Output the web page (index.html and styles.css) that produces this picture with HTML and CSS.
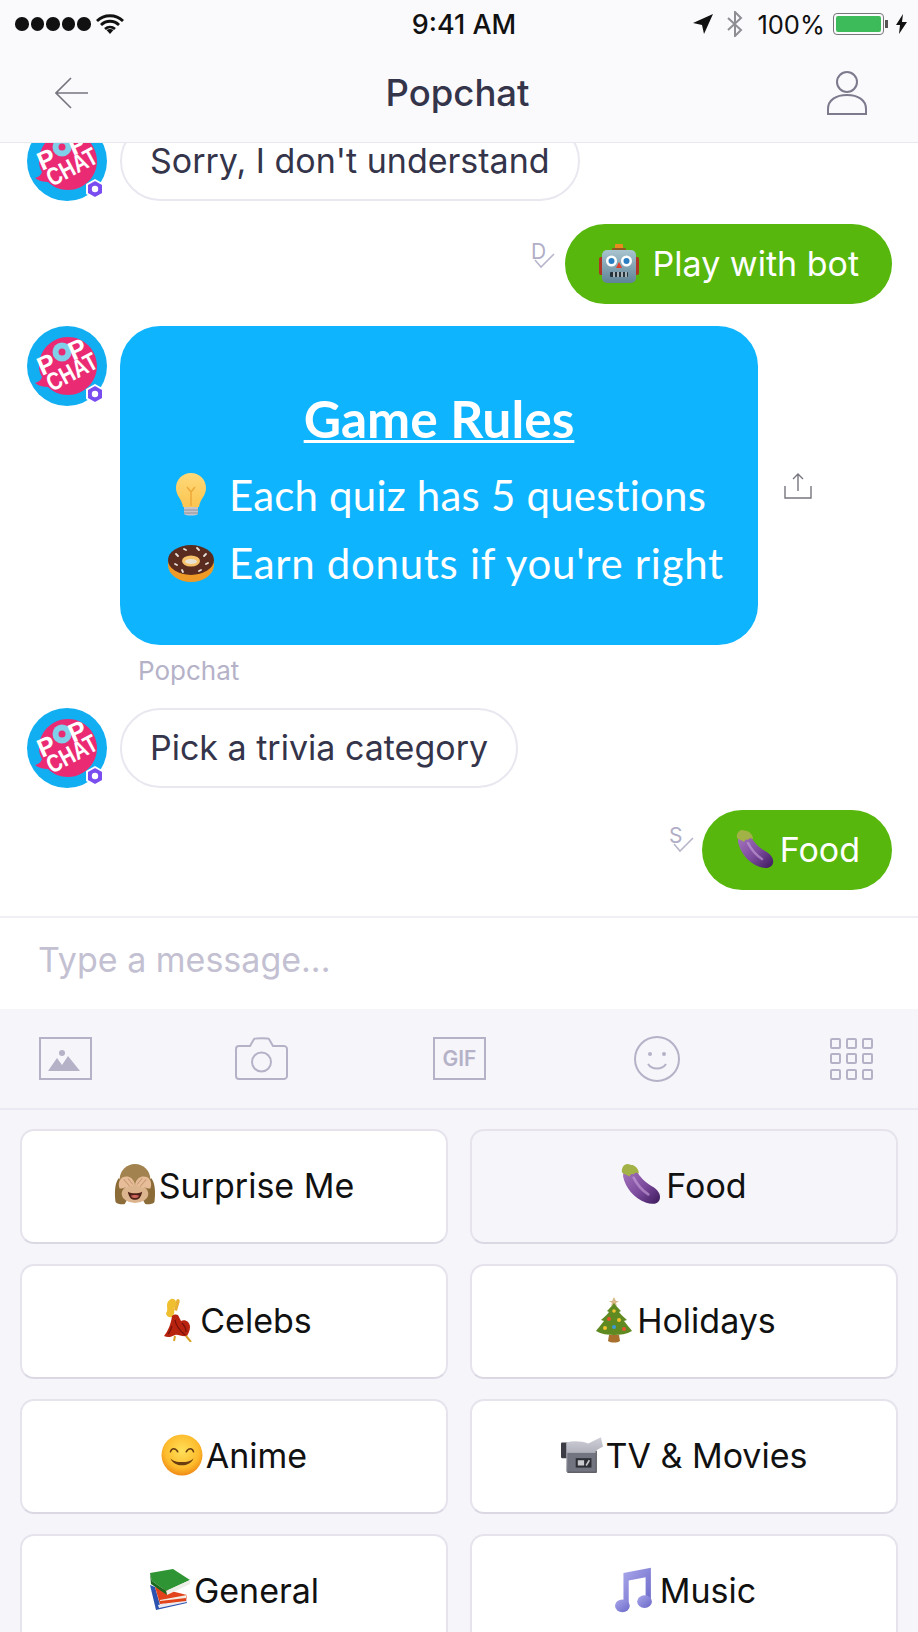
FILE: index.html
```html
<!DOCTYPE html>
<html lang="en">
<head>
    <meta charset="UTF-8">
    <meta name="viewport" content="width=device-width, initial-scale=1.0">
    <title>Popchat</title>
    <link rel="stylesheet" href="styles.css">
</head>
<body>

    <!-- shared drawings -->
    <svg class="sprites" aria-hidden="true">
        <defs>
            <linearGradient id="g-egg" x1="0" y1="0" x2="1" y2="1">
                <stop offset="0" stop-color="#a878c0"/>
                <stop offset="0.55" stop-color="#7b4a9c"/>
                <stop offset="1" stop-color="#3c1a5c"/>
            </linearGradient>
            <radialGradient id="g-smile" cx="0.5" cy="0.4" r="0.6">
                <stop offset="0" stop-color="#ffe05a"/>
                <stop offset="0.7" stop-color="#fdbb2c"/>
                <stop offset="1" stop-color="#ef8a16"/>
            </radialGradient>
            <linearGradient id="g-bulb" x1="0" y1="0" x2="0" y2="1">
                <stop offset="0" stop-color="#ffd97a"/>
                <stop offset="1" stop-color="#fbc550"/>
            </linearGradient>
            <linearGradient id="g-robot" x1="0" y1="0" x2="0" y2="1">
                <stop offset="0" stop-color="#a8c4cf"/>
                <stop offset="1" stop-color="#5f8497"/>
            </linearGradient>
            <linearGradient id="g-cam" x1="0" y1="0" x2="0" y2="1">
                <stop offset="0" stop-color="#cfd0d8"/>
                <stop offset="1" stop-color="#8b8d99"/>
            </linearGradient>
            <linearGradient id="g-note" x1="0" y1="0" x2="1" y2="1">
                <stop offset="0" stop-color="#a9a7ea"/>
                <stop offset="1" stop-color="#6a68c8"/>
            </linearGradient>

            <symbol id="avatar" viewBox="0 0 80 80">
                <circle cx="40" cy="40" r="40" fill="#12aef2"/>
                <path d="M41 11c16 0 29 13 29 29S57 69 41 69c-8 0-15-3-20-8-4 0-9-1-13-4 4-1 6-3 7-6-2-3-3-7-3-11 0-16 13-29 29-29z" fill="#ea2b74"/>
                <circle cx="35" cy="26" r="9.500" fill="#7fd0e8"/>
                <circle cx="35" cy="26" r="3.500" fill="#ea2b74"/>
                <text class="logo-text" transform="translate(15 50) rotate(-24)" font-size="26">P</text>
                <text class="logo-text" transform="translate(46 35) rotate(-24)" font-size="26">P</text>
                <text class="logo-text" transform="translate(25 66) rotate(-28)" font-size="25" textLength="54" lengthAdjust="spacingAndGlyphs">CHAT</text>
                <path d="M68 59l8 4.500v9L68 77l-8-4.500v-9z" fill="#7a4df0" stroke="#fff" stroke-width="2" stroke-linejoin="round"/>
                <circle cx="68" cy="68" r="3.200" fill="#fff"/>
            </symbol>

            <symbol id="e-eggplant" viewBox="0 0 40 40">
                <path d="M3 6c4-3 9-3 12 1 3 5 7 10 14 14 6 3 9 8 8 12-1 5-7 6-13 4C12 33 4 22 2 12c0-2 0-4 1-6z" fill="url(#g-egg)"/>
                <path d="M12 13c3 6 8 12 14 16" fill="none" stroke="#c9a3dc" stroke-width="2.500" stroke-linecap="round" opacity=".6"/>
                <path d="M1 8C0 4 3 0 6 0c2 0 3 1 5 1 3 1 6 4 6 8-2-1-4-1-5 1-2-1-3 0-4 2C6 10 3 10 1 8z" fill="#a3b246"/>
            </symbol>

            <symbol id="e-robot" viewBox="0 0 40 40">
                <rect x="0" y="13" width="5" height="18" rx="2" fill="#b03524"/>
                <rect x="35" y="13" width="5" height="18" rx="2" fill="#b03524"/>
                <rect x="16" y="0" width="8" height="5" rx="1" fill="#e88a1e"/>
                <rect x="13" y="4" width="14" height="3" rx="1" fill="#8a5a22"/>
                <rect x="3" y="6" width="34" height="33" rx="5" fill="url(#g-robot)"/>
                <circle cx="12.500" cy="17" r="5.500" fill="#fff"/>
                <circle cx="12.500" cy="17" r="3" fill="#2a7fc4"/>
                <circle cx="27.500" cy="17" r="5.500" fill="#fff"/>
                <circle cx="27.500" cy="17" r="3" fill="#2a7fc4"/>
                <path d="M20 18l3 6h-6z" fill="#e0402c"/>
                <rect x="11" y="28" width="18" height="5" rx="1" fill="#25333b"/>
                <path d="M15 28v5M19 28v5M23 28v5M27 28v5" stroke="#d5dde0" stroke-width="1.500"/>
            </symbol>

            <symbol id="e-bulb" viewBox="0 0 32 44">
                <path d="M16 0C7 0 1 7 1 15c0 8 6 11 7 19h16c1-8 7-11 7-19C31 7 25 0 16 0z" fill="url(#g-bulb)"/>
                <path d="M16 33V18M12 14l4 5 4-5" fill="none" stroke="#eda93a" stroke-width="1.500"/>
                <path d="M9 34h14v7c-2 2-12 2-14 0z" fill="#c4c4cc"/>
                <path d="M9 37h14M9 40h14" stroke="#8f8f98" stroke-width="1.200"/>
            </symbol>

            <symbol id="e-donut" viewBox="0 0 46 38">
                <ellipse cx="23" cy="21" rx="23" ry="17" fill="#ef9a26"/>
                <ellipse cx="23" cy="16" rx="23" ry="15" fill="#5a2c20"/>
                <ellipse cx="23" cy="17" rx="9" ry="5.500" fill="#f6c36a"/>
                <ellipse cx="23" cy="17.500" rx="6" ry="2.500" fill="#e8e2d4"/>
                <path d="M8 10l2 2M16 5l2 1M29 4l2 2M38 10l-2 2M40 19l-2 1M7 20l2 1M14 26l1 2M31 27l2-1" stroke="#e9e2da" stroke-width="1.800" stroke-linecap="round"/>
            </symbol>

            <symbol id="e-monkey" viewBox="0 0 40 41">
                <path d="M1 37c-1-8-1-18 3-23l8 4 16 0 8-4c4 5 4 15 3 23-1 2-7 3-9 2-2-4-5-7-10-7s-8 3-10 7c-2 1-8 0-9-2z" fill="#8b6b38"/>
                <circle cx="20" cy="15" r="15" fill="#a2824e"/>
                <ellipse cx="20" cy="29" rx="13" ry="9" fill="#dcb48e"/>
                <path d="M13 27c4 2 10 2 14 0-1 6-4 8-7 8s-6-2-7-8z" fill="#4e2218"/>
                <path d="M16 31c2-1 6-1 8 0-1 3-7 3-8 0z" fill="#c9655a"/>
                <path d="M5 24c-2-5 0-9 3-11 4-2 10-1 12 7-4 2-7 3-10 3-2 1-4 1-5 1z" fill="#e7bd99"/>
                <path d="M35 24c2-5 0-9-3-11-4-2-10-1-12 7 4 2 7 3 10 3 2 1 4 1 5 1z" fill="#e7bd99"/>
                <path d="M9 15l6 7M13 14l5 6M31 15l-6 7M27 14l-5 6" stroke="#c79a74" stroke-width="1"/>
            </symbol>

            <symbol id="e-dancer" viewBox="0 0 28 44">
                <path d="M14 1c2 0 2 3 1 5l-2 7-3-1 2-8c0-2 1-3 2-3z" fill="#e8b035"/>
                <path d="M7 1c4-1 6 3 5 6l-2 4c1 3 0 6-2 8-3 1-6-1-6-4 2-2 1-5 1-8 0-3 2-5 4-6z" fill="#efbf30"/>
                <path d="M8 18c3-2 6-2 7 1l2 4c4-2 9 1 9 6 0 4-2 7-3 9-5 1-9-2-12-1-4 2-7 3-11 1 4-5 7-12 8-20z" fill="#b8230f"/>
                <path d="M11 22c1 6 4 10 10 15M18 25c2 2 4 5 4 9M8 28c-1 3-2 6-4 8" fill="none" stroke="#78120a" stroke-width="1.300"/>
                <path d="M22 38l5 6M11 38l-1 5" stroke="#d9a227" stroke-width="2"/>
            </symbol>

            <symbol id="e-tree" viewBox="0 0 38 46">
                <path d="M19 0l2 4h3l-3 2 1 3-3-2-3 2 1-3-3-2h3z" fill="#d9b98a"/>
                <path d="M19 6c3 4 5 6 7 8l-2 1c3 4 6 6 8 8l-3 1c3 4 6 7 8 10-5 3-12 4-18 4S6 37 1 34c2-3 5-6 8-10l-3-1c2-2 5-4 8-8l-2-1c2-2 4-4 7-8z" fill="#5f8a22"/>
                <path d="M14 38l-1 6c3 2 9 2 12 0l-1-6z" fill="#a8702c"/>
                <circle cx="19" cy="14" r="1.800" fill="#f2c230"/>
                <circle cx="14" cy="22" r="2" fill="#e8552c"/>
                <circle cx="24" cy="23" r="2" fill="#f2c230"/>
                <circle cx="10" cy="31" r="2" fill="#f2c230"/>
                <circle cx="19" cy="30" r="2" fill="#3d9ad6"/>
                <circle cx="29" cy="32" r="2" fill="#e8552c"/>
            </symbol>

            <symbol id="e-smile" viewBox="0 0 40 40">
                <circle cx="20" cy="20" r="19.500" fill="url(#g-smile)"/>
                <path d="M9 17c1-4 5-4 7 0M24 17c2-4 6-4 7 0" fill="none" stroke="#6a3d10" stroke-width="1.400" stroke-linecap="round"/>
                <path d="M9 23c3 9 19 9 22 0-4 5-18 5-22 0z" fill="#6a3d10"/>
            </symbol>

            <symbol id="e-camera" viewBox="0 0 40 34">
                <rect x="0" y="5" width="7" height="15" rx="1" fill="#3c3d44"/>
                <path d="M5 5c8-2 15-1 21 1L38 0l2 9-7 4v20H5z" fill="url(#g-cam)"/>
                <rect x="6" y="15" width="27" height="18" fill="#72747f"/>
                <path d="M6 33h27v1H6zM33 13h1v21h-1z" fill="#2e2f36"/>
                <rect x="14" y="20" width="15" height="9" fill="#2e2f36"/>
                <rect x="16" y="22" width="6" height="5" fill="#c9cad0"/>
                <path d="M24 27l3-5" stroke="#c9cad0" stroke-width="1.500"/>
            </symbol>

            <symbol id="e-books" viewBox="0 0 40 42">
                <path d="M0 16L6 41l31-7-1-4-26 6L5 18z" fill="#2c53b0"/>
                <path d="M8 36l28-6 1 3-28 6z" fill="#eceaf0"/>
                <path d="M5 18l32 8-1 6-26 3z" fill="#e2431a"/>
                <path d="M10 31l27-5-1 3-26 3z" fill="#f3ece2"/>
                <path d="M0 4L23 0l17 11-24 11L2 12z" fill="#2f9433"/>
                <path d="M16 22l24-11v4L17 26z" fill="#eeeee8"/>
                <path d="M0 4l2 8 14 10 1 4L1 15z" fill="#1c6a20"/>
            </symbol>

            <symbol id="e-note" viewBox="0 0 36 42">
                <path d="M8 5l26-5v32h-5V9l-16 3v24H8z" fill="url(#g-note)"/>
                <ellipse cx="7" cy="36" rx="7" ry="6" fill="url(#g-note)"/>
                <ellipse cx="28" cy="32" rx="7" ry="6" fill="url(#g-note)"/>
            </symbol>
        </defs>
    </svg>

    <header class="top">
        <div class="status">
            <div class="status-left">
                <span class="dots"><i></i><i></i><i></i><i></i><i></i></span>
                <svg class="wifi" viewBox="0 0 28 20">
                    <path d="M1 7c7-7 19-7 26 0M5 11c5-5 13-5 18 0M9 15c3-2.500 7-2.500 10 0" fill="none" stroke="#111" stroke-width="2.800"/>
                    <path d="M14 20l-3.500-4c2-1.500 5-1.500 7 0z" fill="#111"/>
                </svg>
            </div>
            <div class="status-time">9:41 AM</div>
            <div class="status-right">
                <svg class="loc" viewBox="0 0 20 20"><path d="M20 0L0 9l9 2 2 9z" fill="#111"/></svg>
                <svg class="bt" viewBox="0 0 18 26"><path d="M2 7l13 12-6 6V1l6 6L2 19" fill="none" stroke="#8e8e93" stroke-width="2"/></svg>
                <span class="pct">100%</span>
                <span class="battery"><span class="battery-fill"></span></span>
                <span class="battery-nub"></span>
                <svg class="bolt" viewBox="0 0 11 20"><path d="M7 0L0 11h4l-1 9 8-12H6z" fill="#111"/></svg>
            </div>
        </div>
        <div class="nav">
            <svg class="nav-back" viewBox="0 0 33 32"><path d="M33 16H1M16 1L1 16l15 15" fill="none" stroke="#77757f" stroke-width="1.600"/></svg>
            <h1>Popchat</h1>
            <svg class="nav-user" viewBox="0 0 40 44">
                <circle cx="20" cy="11" r="10" fill="none" stroke="#7c7a8c" stroke-width="2"/>
                <path d="M1 43v-5c0-9 8-14 19-14s19 5 19 14v5z" fill="none" stroke="#7c7a8c" stroke-width="2"/>
            </svg>
        </div>
    </header>

    <main class="chat">
        <div class="row row-first">
            <svg class="avatar"><use href="#avatar"/></svg>
            <div class="bubble">Sorry, I don't understand</div>
        </div>

        <div class="row row-sent">
            <svg class="receipt" viewBox="0 -8 26 36">
                <text x="1" y="17" class="receipt-text">D</text>
                <path d="M5 18l6 7 13-13" fill="none" stroke="#b8b6cc" stroke-width="1.600"/>
            </svg>
            <div class="bubble bubble-sent bubble-robot">
                <svg class="emoji-robot"><use href="#e-robot"/></svg>
                <span>Play with bot</span>
            </div>
        </div>

        <div class="row-group">
            <div class="row row-center">
                <svg class="avatar avatar-top"><use href="#avatar"/></svg>
                <div class="card">
                    <h2>Game Rules</h2>
                    <div class="card-line">
                        <span class="card-icon"><svg class="emoji-bulb"><use href="#e-bulb"/></svg></span>
                        <span>Each quiz has 5 questions</span>
                    </div>
                    <div class="card-line card-line-wide">
                        <span class="card-icon"><svg class="emoji-donut"><use href="#e-donut"/></svg></span>
                        <span>Earn donuts if you're right</span>
                    </div>
                </div>
                <svg class="share" viewBox="0 0 28 26">
                    <path d="M14 18V1M9 6l5-5 5 5M1 13v12h26V13" fill="none" stroke="#77757f" stroke-width="1.400"/>
                </svg>
            </div>
            <div class="sender">Popchat</div>
        </div>

        <div class="row">
            <svg class="avatar"><use href="#avatar"/></svg>
            <div class="bubble">Pick a trivia category</div>
        </div>

        <div class="row row-sent row-sent-tight">
            <svg class="receipt receipt-s" viewBox="0 -8 26 36">
                <text x="0" y="17" class="receipt-text">S</text>
                <path d="M5 18l6 7 13-13" fill="none" stroke="#b8b6cc" stroke-width="1.600"/>
            </svg>
            <div class="bubble bubble-sent bubble-food">
                <svg class="emoji-food"><use href="#e-eggplant"/></svg>
                <span>Food</span>
            </div>
        </div>
    </main>

    <div class="composer">Type a message...</div>

    <div class="tools">
        <svg class="tool-wide" viewBox="0 0 53 43">
            <rect x="1" y="1" width="51" height="41" fill="none" stroke="#b5b2c8" stroke-width="2"/>
            <circle cx="23" cy="16" r="3" fill="#b5b2c8"/>
            <path d="M9 34l9-13 5 7 6-9 12 15z" fill="#b5b2c8"/>
        </svg>
        <svg class="tool-wide" viewBox="0 0 53 43">
            <path d="M4 9h11l4-7c1-1 14-1 15 0l4 7h11c1 0 3 1 3 3v27c0 2-2 3-3 3H4c-2 0-3-1-3-3V12c0-2 1-3 3-3z" fill="none" stroke="#b5b2c8" stroke-width="2"/>
            <circle cx="26.500" cy="25" r="9.500" fill="none" stroke="#b5b2c8" stroke-width="2"/>
        </svg>
        <svg class="tool-wide" viewBox="0 0 53 43">
            <rect x="1" y="1" width="51" height="41" fill="none" stroke="#b5b2c8" stroke-width="2"/>
            <text x="26.500" y="29" text-anchor="middle" class="gif-text">GIF</text>
        </svg>
        <svg class="tool-smile" viewBox="0 0 46 46">
            <circle cx="23" cy="23" r="22" fill="none" stroke="#b5b2c8" stroke-width="2"/>
            <circle cx="16" cy="18" r="2" fill="#b5b2c8"/>
            <circle cx="30" cy="18" r="2" fill="#b5b2c8"/>
            <path d="M14 28c4 6 14 6 18 0" fill="none" stroke="#b5b2c8" stroke-width="2"/>
        </svg>
        <div class="tool-grid"><i></i><i></i><i></i><i></i><i></i><i></i><i></i><i></i><i></i></div>
    </div>

    <div class="options">
        <div class="option"><svg class="emoji"><use href="#e-monkey"/></svg><span>Surprise Me</span></div>
        <div class="option option-picked"><svg class="emoji"><use href="#e-eggplant"/></svg><span>Food</span></div>
        <div class="option"><svg class="emoji emoji-narrow"><use href="#e-dancer"/></svg><span>Celebs</span></div>
        <div class="option"><svg class="emoji emoji-tree"><use href="#e-tree"/></svg><span>Holidays</span></div>
        <div class="option"><svg class="emoji"><use href="#e-smile"/></svg><span>Anime</span></div>
        <div class="option"><svg class="emoji"><use href="#e-camera"/></svg><span>TV &amp; Movies</span></div>
        <div class="option"><svg class="emoji"><use href="#e-books"/></svg><span>General</span></div>
        <div class="option"><svg class="emoji emoji-note"><use href="#e-note"/></svg><span>Music</span></div>
    </div>

</body>
</html>
```

FILE: styles.css
```css
* {
    box-sizing: border-box;
}
html, body {
    margin: 0;
    height: 1632px;
    overflow: hidden;
}
body {
    width: 918px;
    background-color: #fff;
    font-family: Inter, "Noto Sans", sans-serif;
    color: #34344a;
}
.sprites {
    display: block;
    width: 0;
    height: 0;
}

/* top bars, the scrolled chat slides under them */
.top {
    position: relative;
    z-index: 1;
    height: 143px;
    background-color: #faf9fc;
    border-bottom: 1px solid #e9e7ef;
}
.status {
    height: 48px;
    padding: 0 11px 0 15px;
    display: grid;
    grid-template-columns: 1fr auto 1fr;
    align-items: center;
    color: #111;
}
.status-left {
    display: flex;
    align-items: center;
    gap: 5px;
}
.dots {
    display: flex;
    gap: 2px;
}
.dots i {
    width: 13.500px;
    height: 13.500px;
    border-radius: 50%;
    background-color: #111;
}
.wifi {
    width: 28px;
    height: 20px;
}
.status-time {
    padding-left: 6px;
    font-size: 27px;
    font-weight: 500;
}
.status-right {
    display: flex;
    align-items: center;
    justify-content: flex-end;
}
.loc {
    width: 20px;
    height: 20px;
    margin-right: 13px;
}
.bt {
    width: 18px;
    height: 26px;
    margin-right: 13px;
}
.pct {
    font-size: 25.500px;
    margin-right: 8px;
}
.battery {
    width: 51px;
    height: 22px;
    padding: 2px;
    border: 1px solid #777;
    border-radius: 4px;
    display: block;
}
.battery-fill {
    display: block;
    height: 100%;
    border-radius: 2px;
    background-color: #3dbb5a;
}
.battery-nub {
    width: 3px;
    height: 8px;
    margin: 0 8px 0 1px;
    background-color: #555;
}
.bolt {
    width: 11px;
    height: 20px;
}
.nav {
    height: 94px;
    padding: 0 51px 4px 55px;
    display: flex;
    align-items: center;
    justify-content: space-between;
}
.nav h1 {
    margin: 0;
    font-size: 36.500px;
    font-weight: 500;
    color: #34344a;
}
.nav-back {
    width: 33px;
    height: 32px;
}
.nav-user {
    width: 40px;
    height: 44px;
}

/* messages */
.chat {
    height: 773px;
    padding: 0 26px 0 27px;
    display: flex;
    flex-direction: column;
    gap: 22px;
}
.row {
    display: flex;
    gap: 13px;
}
.row-first {
    margin-top: -22px;
    margin-bottom: 1px;
}
.row-sent {
    justify-content: flex-end;
    gap: 9px;
}
.row-sent-tight {
    gap: 7px;
}
.row-center {
    align-items: center;
}
.avatar {
    flex: none;
    width: 80px;
    height: 80px;
}
.avatar-top {
    align-self: flex-start;
}
.logo-text {
    font-family: "Liberation Sans", sans-serif;
    font-weight: 700;
    fill: #fff;
}
.bubble {
    height: 80px;
    padding: 0 28px;
    display: flex;
    align-items: center;
    font-size: 34px;
    line-height: 1;
    background-color: #fff;
    border: 2px solid #e9e7ef;
    border-radius: 40px;
}
.bubble-sent {
    border: 0;
    background-color: #57b70c;
    color: #fff;
}
.bubble-robot {
    padding: 0 33px 0 34px;
    gap: 14px;
}
.bubble-food {
    padding: 0 32px 0 34px;
    gap: 4px;
}
.emoji-robot,
.emoji-food {
    width: 40px;
    height: 40px;
}
.receipt {
    width: 26px;
    height: 36px;
    margin-top: 10px;
}
.receipt-s {
    margin-top: 8px;
}
.receipt-text {
    font-size: 21px;
    fill: #b0aec6;
}
.row-group {
    display: flex;
    flex-direction: column;
}
.card {
    width: 638px;
    height: 319px;
    padding: 64px 0 0 48px;
    background-color: #0fb4ff;
    border-radius: 40px;
    font-family: Lato, sans-serif;
    font-variant-ligatures: none;
    color: #fff;
    font-size: 42px;
    letter-spacing: 0.2px;
    display: flex;
    flex-direction: column;
}
.card h2 {
    margin: 0 0 26px -48px;
    font-size: 51.500px;
    font-weight: 700;
    letter-spacing: 0;
    line-height: 56px;
    text-align: center;
    text-decoration: underline;
    text-decoration-thickness: 3px;
}
.card-line {
    display: flex;
    align-items: center;
    gap: 15px;
    height: 46px;
    margin-bottom: 22px;
}
.card-line-wide {
    letter-spacing: 0.7px;
}
.card-icon {
    width: 46px;
    display: flex;
    justify-content: center;
}
.emoji-bulb {
    width: 32px;
    height: 44px;
}
.emoji-donut {
    width: 46px;
    height: 38px;
}
.share {
    flex: none;
    width: 28px;
    height: 26px;
    margin-left: 13px;
}
.sender {
    height: 41px;
    padding: 10px 0 0 111px;
    font-size: 26px;
    color: #b5b2c8;
}

/* input and toolbar */
.composer {
    height: 93px;
    padding: 0 0 8px 38px;
    display: flex;
    align-items: center;
    font-size: 34px;
    color: #c3c0d2;
    border-top: 2px solid #f0eff4;
}
.tools {
    height: 101px;
    padding-left: 39px;
    background-color: #f6f5fa;
    border-bottom: 2px solid #ebe9f1;
    display: grid;
    grid-template-columns: 196px 198px 201px 196px 43px;
    align-items: center;
}
.tool-wide {
    width: 53px;
    height: 43px;
}
.tool-smile {
    width: 46px;
    height: 46px;
}
.gif-text {
    font-family: Inter, sans-serif;
    font-size: 21px;
    font-weight: 600;
    fill: #b5b2c8;
}
.tool-grid {
    width: 43px;
    height: 42px;
    display: grid;
    grid-template-columns: repeat(3, 11px);
    grid-template-rows: repeat(3, 11px);
    justify-content: space-between;
    align-content: space-between;
}
.tool-grid i {
    border: 2px solid #b5b2c8;
    border-radius: 2px;
}

/* answer buttons */
.options {
    height: 522px;
    padding: 19px 20px 0;
    background-color: #f6f5fa;
    display: grid;
    grid-template-columns: 1fr 1fr;
    grid-auto-rows: 115px;
    gap: 20px 22px;
}
.option {
    padding-bottom: 3px;
    display: flex;
    align-items: center;
    justify-content: center;
    gap: 3px;
    font-size: 34px;
    color: #111;
    background-color: #fff;
    border: 2px solid #e6e3ed;
    border-bottom-color: #dbd8e4;
    border-radius: 14px;
}
.option-picked {
    background-color: #f6f5fa;
}
.emoji {
    width: 42px;
    height: 42px;
}
.emoji-narrow {
    width: 28px;
    height: 44px;
    margin: 0 5px 0 8px;
}
.emoji-tree {
    width: 38px;
    height: 46px;
    margin: 0 1px 0 3px;
}
.emoji-note {
    width: 38px;
    height: 46px;
    margin: 0 4px 0 3px;
}
```
